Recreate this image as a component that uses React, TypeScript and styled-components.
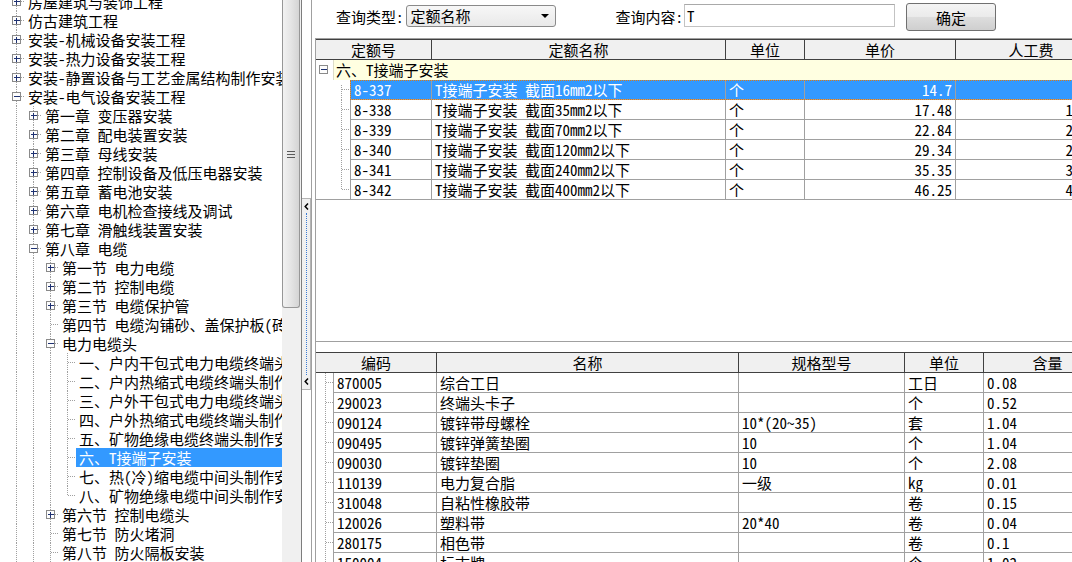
import React from 'react';
import styled, { createGlobalStyle } from 'styled-components';

const FONT = `"Noto Sans Mono CJK SC", "Noto Sans CJK SC", "Liberation Mono", monospace`;

const Global = createGlobalStyle`
  html, body { margin: 0; padding: 0; background: #fff; }
  body { font-family: ${FONT}; font-size: 15px; color: #000; }
`;

/* ---------- layout ---------- */
const Page = styled.div`
  width: 1072px;
  height: 562px;
  overflow: hidden;
  display: flex;
  background: #fff;
`;

/* ---------- tree ---------- */
const TreePanel = styled.div`
  flex: none;
  width: 282px;
  height: 562px;
  overflow: hidden;
  background: #fff;
`;
const TreeList = styled.div`
  margin-top: -8px;
`;
const TreeRowEl = styled.div`
  display: flex;
  height: 19px;
  white-space: nowrap;
`;
const TreeGutter = styled.div`
  flex: none;
  display: flex;
  padding-left: 8px;
`;
const TreeLabel = styled.span<{ $selected?: boolean }>`
  flex: ${(p) => (p.$selected ? '1' : 'none')};
  padding-left: 3px;
  line-height: 19px;
  background: ${(p) => (p.$selected ? '#3399ff' : 'transparent')};
  color: ${(p) => (p.$selected ? '#fff' : '#000')};
`;

const ScrollBar = styled.div`
  flex: none;
  width: 20px;
  box-sizing: border-box;
  border-right: 1px solid #7d7d7d;
  background: #f0f0f0;
`;
const ScrollThumb = styled.div`
  width: 18px;
  height: 308px;
  box-sizing: border-box;
  border: 1px solid #979797;
  border-top: none;
  border-radius: 0 0 3px 3px;
  background: linear-gradient(to right, #f2f2f2, #e6e6e6 45%, #d4d4d4);
  display: flex;
  align-items: center;
  justify-content: center;
`;

const Splitter = styled.div`
  flex: none;
  width: 10px;
  box-sizing: border-box;
  border-right: 1px solid #a0a0a0;
  background: #fff;
  display: flex;
  flex-direction: column;
`;
const SplitHandle = styled.div`
  margin-top: 198px;
  height: 192px;
  box-sizing: border-box;
  border: 1px solid #b4b4b4;
  border-left: none;
  background: #f0f0f0;
  display: flex;
  flex-direction: column;
  align-items: center;
  padding: 4px 0;
`;
const SplitDots = styled.div`
  flex: 1;
  margin: 3px 0;
  border-left: 1px dotted #3a7bd5;
`;

/* ---------- right side ---------- */
const RightPanel = styled.div`
  flex: 1;
  display: flex;
  flex-direction: column;
  min-width: 0;
  background: #fff;
`;
const QueryBar = styled.div`
  flex: none;
  height: 38px;
  display: flex;
  align-items: flex-start;
  padding-left: 24px;
  white-space: nowrap;
`;
const QueryLabel = styled.span<{ $ml?: number }>`
  margin-top: 7px;
  margin-left: ${(p) => p.$ml ?? 0}px;
  line-height: 19px;
`;
const SelectBox = styled.div`
  margin-top: 5px;
  margin-left: 2px;
  width: 150px;
  height: 22px;
  box-sizing: border-box;
  border: 1px solid #8a8a8a;
  border-radius: 3px;
  background: linear-gradient(#f7f7f7, #e9e9e9);
  display: flex;
  align-items: center;
  justify-content: space-between;
  padding: 0 6px 0 4px;
  line-height: 20px;
`;
const TextInput = styled.div`
  margin-top: 4px;
  margin-left: 1px;
  width: 211px;
  height: 23px;
  box-sizing: border-box;
  border: 1px solid #c3c3c3;
  border-top-color: #a9a9a9;
  padding-left: 2px;
  line-height: 21px;
  background: #fff;
`;
const Button = styled.div`
  margin-top: 3px;
  margin-left: 11px;
  width: 90px;
  height: 28px;
  box-sizing: border-box;
  border: 1px solid #707070;
  border-radius: 3px;
  background: linear-gradient(#f4f4f4, #ebebeb 48%, #dddddd 52%, #cfcfcf);
  display: flex;
  align-items: center;
  justify-content: center;
`;

const GridBox = styled.div<{ $h?: number; $pt?: number }>`
  margin-left: 3px;
  box-sizing: border-box;
  border-left: 1px solid #a0a0a0;
  ${(p) => (p.$h ? `height: ${p.$h}px; flex: none; border-top: 1px solid #a0a0a0; border-bottom: 1px solid #a0a0a0;` : 'flex: 1;')}
  padding-top: ${(p) => p.$pt ?? 0}px;
  overflow: hidden;
  white-space: nowrap;
`;
const HeaderRow = styled.div`
  display: flex;
  height: 21px;
  box-sizing: border-box;
  border-top: 1px solid #404040;
  border-bottom: 1px solid #404040;
  background: #f0f0f0;
`;
const HeaderCell = styled.div<{ $w: number }>`
  flex: none;
  width: ${(p) => p.$w}px;
  box-sizing: border-box;
  border-right: 1px solid #404040;
  text-align: center;
  line-height: 19px;
  overflow: hidden;
`;
const RowsBlock = styled.div`
  border-bottom: 1px solid #a0a0a0;
`;
const GridLine = styled.div`
  display: flex;
  height: 20px;
`;
const LastLine = styled(GridLine)`
  height: 19px;
`;
const Cells = styled.div<{ $sel?: boolean; $last?: boolean }>`
  display: flex;
  box-sizing: border-box;
  border-left: 1px solid #a0a0a0;
  border-bottom: ${(p) => (p.$last ? 'none' : '1px solid #a0a0a0')};
  background: ${(p) => (p.$sel ? '#3399ff' : '#fff')};
  color: ${(p) => (p.$sel ? '#fff' : '#000')};
  outline: ${(p) => (p.$sel ? '1px dotted #e07a10' : 'none')};
  outline-offset: -1px;
`;
const Cell = styled.div<{ $w: number; $right?: boolean }>`
  flex: none;
  width: ${(p) => p.$w}px;
  box-sizing: border-box;
  border-right: 1px solid #a0a0a0;
  padding: 0 3px;
  text-align: ${(p) => (p.$right ? 'right' : 'left')};
  line-height: 19px;
  overflow: hidden;
`;
const GroupBar = styled.div`
  flex: 1;
  border-left: 1px solid #dcdcc8;
  background: #ffffe1;
  padding-left: 2px;
  line-height: 20px;
`;

/* ---------- drawings ---------- */
const LINE = '#a0a0a0';

function Box({ x, y, open }: { x: number; y: number; open: boolean }) {
  return (
    <g shapeRendering="crispEdges">
      <rect x={x - 4} y={y - 4} width={8} height={8} fill="#fdfdfd" stroke="#8a8a8a" />
      <line x1={x - 2.5} y1={y} x2={x + 3} y2={y} stroke="#1f3272" />
      {!open && <line x1={x} y1={y - 2.5} x2={x} y2={y + 3} stroke="#1f3272" />}
    </g>
  );
}

function TreeCol({
  top,
  bottom,
  stub,
  box,
}: {
  top?: boolean;
  bottom?: boolean;
  stub?: boolean;
  box?: 'plus' | 'minus';
}) {
  return (
    <svg width={17} height={19} style={{ display: 'block', flex: 'none' }}>
      <g stroke={LINE} strokeDasharray="1 1" shapeRendering="crispEdges">
        {top && <line x1={8.5} y1={0} x2={8.5} y2={9.5} />}
        {bottom && <line x1={8.5} y1={9.5} x2={8.5} y2={19} />}
        {stub && <line x1={8.5} y1={9.5} x2={17} y2={9.5} />}
      </g>
      {box && <Box x={8.5} y={9.5} open={box === 'minus'} />}
    </svg>
  );
}

function RowConnector({ w, x, first, last }: { w: number; x: number; first?: boolean; last?: boolean }) {
  return (
    <svg width={w} height={20} style={{ display: 'block', flex: 'none' }}>
      <g stroke={LINE} strokeDasharray="1 1" shapeRendering="crispEdges">
        <line x1={x} y1={first ? 5 : 0} x2={x} y2={last ? 9.5 : 20} />
        <line x1={x} y1={9.5} x2={w} y2={9.5} />
      </g>
    </svg>
  );
}

function Chevron() {
  return (
    <svg width={5} height={7} style={{ display: 'block' }}>
      <path d="M4 0.5 L1.2 3.5 L4 6.5" stroke="#000" strokeWidth={1.5} fill="none" />
    </svg>
  );
}

function Grip() {
  return (
    <svg width={8} height={8} style={{ display: 'block' }}>
      <g stroke="#5a5a5a" shapeRendering="crispEdges">
        <line x1={0} y1={1.5} x2={8} y2={1.5} />
        <line x1={0} y1={4.5} x2={8} y2={4.5} />
        <line x1={0} y1={7.5} x2={8} y2={7.5} />
      </g>
    </svg>
  );
}

function Caret() {
  return (
    <svg width={8} height={4} style={{ display: 'block' }}>
      <path d="M0 0 H8 L4 4 Z" fill="#000" />
    </svg>
  );
}

/* ---------- data ---------- */
type Kind = 'plus' | 'minus' | 'leaf';
const tree: { d: number; t: string; k: Kind; sel?: boolean }[] = [
  { d: 0, t: '房屋建筑与装饰工程', k: 'plus' },
  { d: 0, t: '仿古建筑工程', k: 'plus' },
  { d: 0, t: '安装-机械设备安装工程', k: 'plus' },
  { d: 0, t: '安装-热力设备安装工程', k: 'plus' },
  { d: 0, t: '安装-静置设备与工艺金属结构制作安装工程', k: 'plus' },
  { d: 0, t: '安装-电气设备安装工程', k: 'minus' },
  { d: 1, t: '第一章 变压器安装', k: 'plus' },
  { d: 1, t: '第二章 配电装置安装', k: 'plus' },
  { d: 1, t: '第三章 母线安装', k: 'plus' },
  { d: 1, t: '第四章 控制设备及低压电器安装', k: 'plus' },
  { d: 1, t: '第五章 蓄电池安装', k: 'plus' },
  { d: 1, t: '第六章 电机检查接线及调试', k: 'plus' },
  { d: 1, t: '第七章 滑触线装置安装', k: 'plus' },
  { d: 1, t: '第八章 电缆', k: 'minus' },
  { d: 2, t: '第一节 电力电缆', k: 'plus' },
  { d: 2, t: '第二节 控制电缆', k: 'plus' },
  { d: 2, t: '第三节 电缆保护管', k: 'plus' },
  { d: 2, t: '第四节 电缆沟铺砂、盖保护板(砖)', k: 'leaf' },
  { d: 2, t: '电力电缆头', k: 'minus' },
  { d: 3, t: '一、户内干包式电力电缆终端头制作安装', k: 'leaf' },
  { d: 3, t: '二、户内热缩式电缆终端头制作安装', k: 'leaf' },
  { d: 3, t: '三、户外干包式电力电缆终端头制作安装', k: 'leaf' },
  { d: 3, t: '四、户外热缩式电缆终端头制作安装', k: 'leaf' },
  { d: 3, t: '五、矿物绝缘电缆终端头制作安装', k: 'leaf' },
  { d: 3, t: '六、T接端子安装', k: 'leaf', sel: true },
  { d: 3, t: '七、热(冷)缩电缆中间头制作安装', k: 'leaf' },
  { d: 3, t: '八、矿物绝缘电缆中间头制作安装', k: 'leaf' },
  { d: 2, t: '第六节 控制电缆头', k: 'plus' },
  { d: 2, t: '第七节 防火堵洞', k: 'leaf' },
  { d: 2, t: '第八节 防火隔板安装', k: 'leaf' },
];

function hasNext(i: number) {
  const d = tree[i].d;
  for (let j = i + 1; j < tree.length; j++) {
    if (tree[j].d < d) return false;
    if (tree[j].d === d) return true;
  }
  return true; // list continues below the visible area
}
function ancestorAt(i: number, level: number) {
  for (let j = i - 1; j >= 0; j--) if (tree[j].d === level) return j;
  return -1;
}

const quotas = [
  ['8-337', 'T接端子安装 截面16mm2以下', '个', '14.7', '9.52'],
  ['8-338', 'T接端子安装 截面35mm2以下', '个', '17.48', '12.77'],
  ['8-339', 'T接端子安装 截面70mm2以下', '个', '22.84', '20.18'],
  ['8-340', 'T接端子安装 截面120mm2以下', '个', '29.34', '24.15'],
  ['8-341', 'T接端子安装 截面240mm2以下', '个', '35.35', '30.68'],
  ['8-342', 'T接端子安装 截面400mm2以下', '个', '46.25', '40.14'],
];
const upperHead = [
  ['定额号', 116],
  ['定额名称', 294],
  ['单位', 79],
  ['单价', 151],
  ['人工费', 151],
] as const;
const upperCols = [81, 294, 79, 151, 151];

const materials = [
  ['870005', '综合工日', '', '工日', '0.08'],
  ['290023', '终端头卡子', '', '个', '0.52'],
  ['090124', '镀锌带母螺栓', '10*(20~35)', '套', '1.04'],
  ['090495', '镀锌弹簧垫圈', '10', '个', '1.04'],
  ['090030', '镀锌垫圈', '10', '个', '2.08'],
  ['110139', '电力复合脂', '一级', 'kg', '0.01'],
  ['310048', '自粘性橡胶带', '', '卷', '0.15'],
  ['120026', '塑料带', '20*40', '卷', '0.04'],
  ['280175', '相色带', '', '卷', '0.1'],
  ['150004', '标志牌', '', '个', '1.02'],
];
const lowerHead = [
  ['编码', 121],
  ['名称', 302],
  ['规格型号', 166],
  ['单位', 79],
  ['含量', 128],
] as const;
const lowerCols = [103, 302, 166, 79, 128];

/* ---------- app ---------- */
export default function App() {
  return (
    <>
      <Global />
      <Page>
        <TreePanel>
          <TreeList>
            {tree.map((n, i) => {
              const guides = [];
              for (let l = 0; l < n.d; l++) {
                const a = ancestorAt(i, l);
                guides.push(<TreeCol key={l} top={hasNext(a)} bottom={hasNext(a)} />);
              }
              return (
                <TreeRowEl key={i}>
                  <TreeGutter>
                    {guides}
                    <TreeCol
                      top
                      bottom={hasNext(i)}
                      stub
                      box={n.k === 'leaf' ? undefined : n.k}
                    />
                  </TreeGutter>
                  <TreeLabel $selected={n.sel}>{n.t}</TreeLabel>
                </TreeRowEl>
              );
            })}
          </TreeList>
        </TreePanel>

        <ScrollBar>
          <ScrollThumb>
            <Grip />
          </ScrollThumb>
        </ScrollBar>

        <Splitter>
          <SplitHandle>
            <Chevron />
            <SplitDots />
            <Chevron />
          </SplitHandle>
        </Splitter>

        <RightPanel>
          <QueryBar>
            <QueryLabel>查询类型:</QueryLabel>
            <SelectBox>
              <span>定额名称</span>
              <Caret />
            </SelectBox>
            <QueryLabel $ml={60}>查询内容:</QueryLabel>
            <TextInput>T</TextInput>
            <Button>确定</Button>
          </QueryBar>

          <GridBox $h={304}>
            <HeaderRow>
              {upperHead.map(([t, w]) => (
                <HeaderCell key={t} $w={w}>
                  {t}
                </HeaderCell>
              ))}
            </HeaderRow>
            <GridLine>
              <svg width={17} height={20} style={{ display: 'block', flex: 'none' }}>
                <Box x={7.5} y={9.5} open />
              </svg>
              <GroupBar>六、T接端子安装</GroupBar>
            </GridLine>
            <RowsBlock>
              {quotas.map((r, i) => {
                const last = i === quotas.length - 1;
                const Line = last ? LastLine : GridLine;
                return (
                  <Line key={r[0]}>
                    <RowConnector w={34} x={25.5} first={i === 0} last={last} />
                    <Cells $sel={i === 0} $last={last}>
                      {r.map((v, c) => (
                        <Cell key={c} $w={upperCols[c]} $right={c >= 3}>
                          {v}
                        </Cell>
                      ))}
                    </Cells>
                  </Line>
                );
              })}
            </RowsBlock>
          </GridBox>

          <GridBox $pt={10}>
            <HeaderRow>
              {lowerHead.map(([t, w]) => (
                <HeaderCell key={t} $w={w}>
                  {t}
                </HeaderCell>
              ))}
            </HeaderRow>
            {materials.map((r) => (
              <GridLine key={r[0]}>
                <RowConnector w={17} x={9.5} />
                <Cells>
                  {r.map((v, c) => (
                    <Cell key={c} $w={lowerCols[c]}>
                      {v}
                    </Cell>
                  ))}
                </Cells>
              </GridLine>
            ))}
          </GridBox>
        </RightPanel>
      </Page>
    </>
  );
}
